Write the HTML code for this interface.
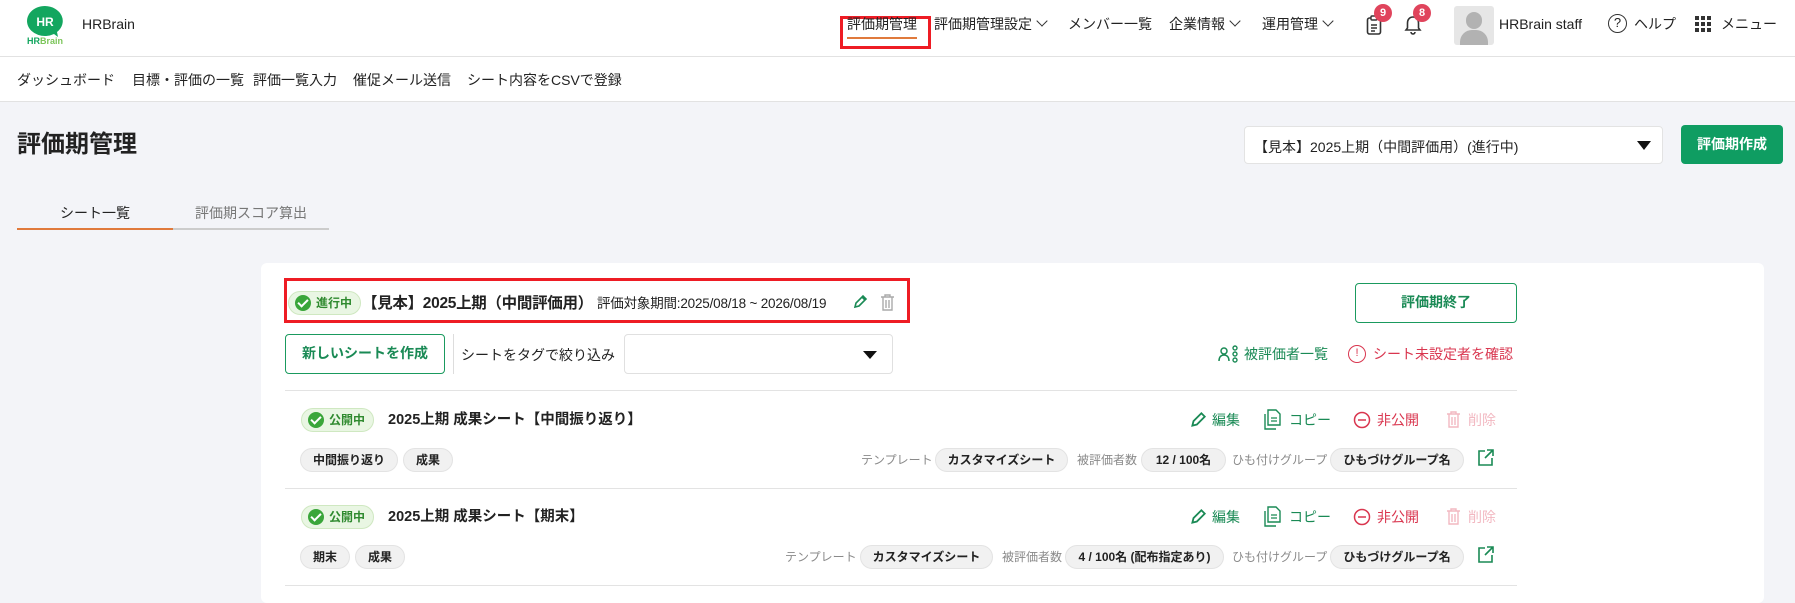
<!DOCTYPE html>
<html><head><meta charset="utf-8"><style>
*{box-sizing:border-box;margin:0;padding:0}
body{width:1795px;height:592px;overflow:hidden;background:#f3f4f8;font-family:"Liberation Sans","Noto Sans CJK JP",sans-serif;color:#222;position:relative}
.a{position:absolute;white-space:nowrap}
.hdr{left:0;top:0;width:1795px;height:57px;background:#fff;border-bottom:1px solid #e2e2e2}
.sub{left:0;top:57px;width:1795px;height:45px;background:#fff;border-bottom:1px solid #e2e2e2}
.nav{font-size:14px;top:15px;line-height:18px;color:#222}
.chev{display:inline-block;width:8px;height:8px;border-right:1.5px solid #333;border-bottom:1.5px solid #333;transform:rotate(45deg);margin:0 0 4px 6px}
.badge{background:#e0445c;color:#fff;font-size:11px;font-weight:bold;width:18px;height:18px;border-radius:9px;text-align:center;line-height:18px}
.sn{top:71px;font-size:14px;line-height:18px}
.card{left:261px;top:263px;width:1503px;height:340px;background:#fff;border-radius:6px}
.st{background:#e9f6e3;border:1px solid #cfe8c1;border-radius:13px;font-size:12px;font-weight:bold;color:#2f8a2f;height:24px;line-height:22px;padding-left:27px;padding-right:8px}
.st i{position:absolute;left:6px;top:3px;width:16px;height:16px;border-radius:8px;background:#3aa63a}
.st i:after{content:"";position:absolute;left:5px;top:2px;width:4px;height:8px;border-right:2px solid #fff;border-bottom:2px solid #fff;transform:rotate(45deg)}
.pill{background:#f1f1f1;border:1px solid #e3e3e3;border-radius:12px;font-size:12px;font-weight:bold;height:24px;line-height:22px;padding:0 10px;text-align:center}
.lbl{font-size:12px;color:#8a8a8a;line-height:22px}
.hr{height:1px;background:#e3e3e3;left:285px;width:1232px}
.act{font-size:14px;line-height:18px}
.g{color:#1a8a55}.r{color:#d9364f}.p{color:#f2b8c1}
</style></head><body>
<div class="a hdr"></div>
<div class="a sub"></div>
<svg class="a" style="left:22px;top:4px" width="46" height="42" viewBox="0 0 46 42"><path d="M23 2a18 15 0 1 0 9 28l4 3-1-5a18 15 0 0 0-12-26z" fill="#13a65f"/><text x="23" y="22" font-size="12" font-weight="bold" fill="#fff" text-anchor="middle" font-family="Liberation Sans">HR</text><text x="23" y="40" font-size="9" font-weight="bold" fill="#13a65f" text-anchor="middle" font-family="Liberation Sans">HR<tspan fill="#7cc55a">Brain</tspan></text></svg>
<div class="a" style="left:82px;top:16px;font-size:14px">HRBrain</div>
<div class="a" style="left:840px;top:16px;width:91px;height:33px;border:3px solid #ee1c24"></div>
<div class="a nav" style="left:847px">評価期管理</div>
<div class="a" style="left:847px;top:37px;width:70px;height:2px;background:#e07a3c"></div>
<div class="a nav" style="left:934px">評価期管理設定<span class="chev"></span></div>
<div class="a nav" style="left:1068px">メンバー一覧</div>
<div class="a nav" style="left:1169px">企業情報<span class="chev"></span></div>
<div class="a nav" style="left:1262px">運用管理<span class="chev"></span></div>
<svg class="a" style="left:1366px;top:15px" width="16" height="20" viewBox="0 0 16 20"><rect x="1.5" y="3" width="13" height="16" rx="2" fill="none" stroke="#333" stroke-width="1.6"/><rect x="5" y="1" width="6" height="4" rx="1" fill="#fff" stroke="#333" stroke-width="1.4"/><path d="M5 10h6M5 13h6M5 16h4" stroke="#333" stroke-width="1.4"/></svg>
<div class="a badge" style="left:1374px;top:4px">9</div>
<svg class="a" style="left:1404px;top:15px" width="18" height="20" viewBox="0 0 18 20"><path d="M9 2c-3.5 0-5.5 2.600-5.500 6v5L2 15h14l-1.5-2V8C14.5 4.6 12.5 2 9 2z" fill="none" stroke="#333" stroke-width="1.6"/><path d="M7 17a2 2 0 0 0 4 0" fill="none" stroke="#333" stroke-width="1.6"/></svg>
<div class="a badge" style="left:1413px;top:4px">8</div>
<div class="a" style="left:1454px;top:6px;width:40px;height:39px;background:#e6e6e6;border-radius:3px;overflow:hidden"><div class="a" style="left:12px;top:6px;width:16px;height:17px;border-radius:8px;background:#b2b2b2"></div><div class="a" style="left:6px;top:24px;width:28px;height:22px;border-radius:12px 12px 0 0;background:#b2b2b2"></div></div>
<div class="a nav" style="left:1499px">HRBrain staff</div>
<div class="a" style="left:1608px;top:14px;width:19px;height:19px;border:1.6px solid #333;border-radius:50%;font-size:13px;text-align:center;line-height:16px">?</div>
<div class="a nav" style="left:1634px">ヘルプ</div>
<svg class="a" style="left:1695px;top:16px" width="16" height="16"><g fill="#333"><rect x="0" y="0" width="4" height="4"/><rect x="6" y="0" width="4" height="4"/><rect x="12" y="0" width="4" height="4"/><rect x="0" y="6" width="4" height="4"/><rect x="6" y="6" width="4" height="4"/><rect x="12" y="6" width="4" height="4"/><rect x="0" y="12" width="4" height="4"/><rect x="6" y="12" width="4" height="4"/><rect x="12" y="12" width="4" height="4"/></g></svg>
<div class="a nav" style="left:1721px">メニュー</div>
<div class="a sn" style="left:17px">ダッシュボード</div>
<div class="a sn" style="left:132px">目標・評価の一覧</div>
<div class="a sn" style="left:253px">評価一覧入力</div>
<div class="a sn" style="left:353px">催促メール送信</div>
<div class="a sn" style="left:467px">シート内容をCSVで登録</div>
<div class="a" style="left:17px;top:130px;font-size:24px;font-weight:bold;line-height:30px">評価期管理</div>
<div class="a" style="left:1244px;top:126px;width:419px;height:38px;background:#fff;border:1px solid #e3e3e3;border-radius:4px"></div>
<div class="a" style="left:1254px;top:137px;font-size:14px">【見本】2025上期（中間評価用）(進行中)</div>
<div class="a" style="left:1637px;top:141px;border-left:7px solid transparent;border-right:7px solid transparent;border-top:9px solid #111"></div>
<div class="a" style="left:1681px;top:125px;width:102px;height:39px;background:#0f9d62;border-radius:4px;color:#fff;font-size:14px;font-weight:bold;text-align:center;line-height:39px">評価期作成</div>
<div class="a" style="left:17px;top:203px;width:156px;text-align:center;font-size:14px">シート一覧</div>
<div class="a" style="left:173px;top:203px;width:156px;text-align:center;font-size:14px;color:#777">評価期スコア算出</div>
<div class="a" style="left:17px;top:228px;width:156px;height:2px;background:#e07a3c"></div>
<div class="a" style="left:173px;top:228px;width:156px;height:2px;background:#ccc"></div>
<div class="a card"></div>
<div class="a" style="left:284px;top:278px;width:626px;height:45px;border:3px solid #ee1c24"></div>
<div class="a st" style="left:288px;top:291px"><i></i>進行中</div>
<div class="a" style="left:362px;top:294px;font-size:15.5px;font-weight:bold;line-height:20px;letter-spacing:-0.3px">【見本】2025上期（中間評価用）</div>
<div class="a" style="left:597px;top:295px;font-size:13.5px;line-height:18px;letter-spacing:-0.2px">評価対象期間:2025/08/18 ~ 2026/08/19</div>
<svg class="a" style="left:852px;top:294px" width="16" height="16" viewBox="0 0 16 16"><path d="M3 13l1-4 7-7 3 3-7 7z M10 3l3 3" fill="none" stroke="#1a8a55" stroke-width="1.6"/></svg>
<svg class="a" style="left:880px;top:293px" width="15" height="18" viewBox="0 0 15 18"><path d="M1 4h13M5 4V2h5v2M3 4v13h9V4M6 7v8M9 7v8" fill="none" stroke="#aaa" stroke-width="1.4"/></svg>
<div class="a g" style="left:1355px;top:283px;width:162px;height:40px;border:1.5px solid #1a9a5e;border-radius:4px;text-align:center;line-height:37px;font-size:14px;font-weight:bold">評価期終了</div>
<div class="a g" style="left:285px;top:334px;width:160px;height:40px;border:1.5px solid #1a9a5e;border-radius:4px;text-align:center;line-height:37px;font-size:14px;font-weight:bold">新しいシートを作成</div>
<div class="a" style="left:453px;top:334px;width:1px;height:40px;background:#ddd"></div>
<div class="a" style="left:461px;top:345px;font-size:14px">シートをタグで絞り込み</div>
<div class="a" style="left:624px;top:334px;width:269px;height:40px;border:1px solid #e0e0e0;border-radius:4px"></div>
<div class="a" style="left:863px;top:351px;border-left:7px solid transparent;border-right:7px solid transparent;border-top:8px solid #111"></div>
<svg class="a" style="left:1218px;top:345px" width="22" height="18" viewBox="0 0 22 18"><circle cx="6" cy="6" r="3" fill="none" stroke="#1a8a55" stroke-width="1.5"/><path d="M1 16c0-4 2-6 5-6s5 2 5 6" fill="none" stroke="#1a8a55" stroke-width="1.5"/><circle cx="17" cy="3" r="2" fill="none" stroke="#1a8a55" stroke-width="1.4"/><circle cx="17" cy="9" r="2" fill="none" stroke="#1a8a55" stroke-width="1.4"/><circle cx="17" cy="15" r="2" fill="none" stroke="#1a8a55" stroke-width="1.4"/></svg>
<div class="a act g" style="left:1244px;top:345px">被評価者一覧</div>
<div class="a r" style="left:1348px;top:345px;width:18px;height:18px;border:1.5px solid #d9364f;border-radius:50%;font-size:11px;text-align:center;line-height:15px">!</div>
<div class="a act r" style="left:1373px;top:345px">シート未設定者を確認</div>
<div class="a hr" style="top:390px"></div>
<div class="a st" style="left:301px;top:408px"><i></i>公開中</div>
<div class="a" style="left:388px;top:411px;font-size:14.5px;font-weight:bold;line-height:18px">2025上期 成果シート【中間振り返り】</div>
<div class="a pill" style="left:300px;top:448px;width:98px">中間振り返り</div>
<div class="a pill" style="left:403px;top:448px;width:50px">成果</div>
<div class="a lbl" style="left:861px;top:449px">テンプレート</div>
<div class="a pill" style="left:935px;top:448px;width:133px">カスタマイズシート</div>
<div class="a lbl" style="left:1077px;top:449px">被評価者数</div>
<div class="a pill" style="left:1141px;top:448px;width:85px">12 / 100名</div>
<div class="a lbl" style="left:1232px;top:449px">ひも付けグループ</div>
<div class="a pill" style="left:1330px;top:448px;width:134px">ひもづけグループ名</div>
<div class="a hr" style="top:488px"></div>
<div class="a st" style="left:301px;top:505px"><i></i>公開中</div>
<div class="a" style="left:388px;top:508px;font-size:14.5px;font-weight:bold;line-height:18px">2025上期 成果シート【期末】</div>
<div class="a pill" style="left:300px;top:545px;width:50px">期末</div>
<div class="a pill" style="left:355px;top:545px;width:50px">成果</div>
<div class="a lbl" style="left:785px;top:546px">テンプレート</div>
<div class="a pill" style="left:860px;top:545px;width:133px">カスタマイズシート</div>
<div class="a lbl" style="left:1002px;top:546px">被評価者数</div>
<div class="a pill" style="left:1065px;top:545px;width:159px">4 / 100名 (配布指定あり)</div>
<div class="a lbl" style="left:1232px;top:546px">ひも付けグループ</div>
<div class="a pill" style="left:1330px;top:545px;width:134px">ひもづけグループ名</div>
<div class="a hr" style="top:585px"></div>
<svg class="a" style="left:1189px;top:411px" width="18" height="18" viewBox="0 0 16 16"><path d="M3 13l1-4 7-7 3 3-7 7z" fill="none" stroke="#1a8a55" stroke-width="1.6"/></svg>
<div class="a act g" style="left:1212px;top:411px">編集</div>
<svg class="a" style="left:1264px;top:409px" width="17" height="21" viewBox="0 0 17 21"><path d="M4 1h8l4 4v11H4z" fill="none" stroke="#1a8a55" stroke-width="1.4"/><path d="M1 5v15h11" fill="none" stroke="#1a8a55" stroke-width="1.4"/><path d="M7 9h6M7 12h6" stroke="#1a8a55" stroke-width="1.3"/></svg>
<div class="a act g" style="left:1289px;top:411px">コピー</div>
<svg class="a" style="left:1353px;top:411px" width="18" height="18"><circle cx="9" cy="9" r="7.5" fill="none" stroke="#d9364f" stroke-width="1.5"/><path d="M5 9h8" stroke="#d9364f" stroke-width="1.5"/></svg>
<div class="a act r" style="left:1377px;top:411px">非公開</div>
<svg class="a" style="left:1446px;top:410px" width="15" height="18" viewBox="0 0 15 18"><path d="M1 4h13M5 4V2h5v2M3 4v13h9V4M6 7v8M9 7v8" fill="none" stroke="#f2b8c1" stroke-width="1.4"/></svg>
<div class="a act p" style="left:1468px;top:411px">削除</div>
<svg class="a" style="left:1477px;top:449px" width="17" height="17" viewBox="0 0 17 17"><path d="M8 2H2v14h13V9M10 1h6v6M16 1L8 9" fill="none" stroke="#1a8a55" stroke-width="1.6"/></svg>
<svg class="a" style="left:1189px;top:508px" width="18" height="18" viewBox="0 0 16 16"><path d="M3 13l1-4 7-7 3 3-7 7z" fill="none" stroke="#1a8a55" stroke-width="1.6"/></svg>
<div class="a act g" style="left:1212px;top:508px">編集</div>
<svg class="a" style="left:1264px;top:506px" width="17" height="21" viewBox="0 0 17 21"><path d="M4 1h8l4 4v11H4z" fill="none" stroke="#1a8a55" stroke-width="1.4"/><path d="M1 5v15h11" fill="none" stroke="#1a8a55" stroke-width="1.4"/><path d="M7 9h6M7 12h6" stroke="#1a8a55" stroke-width="1.3"/></svg>
<div class="a act g" style="left:1289px;top:508px">コピー</div>
<svg class="a" style="left:1353px;top:508px" width="18" height="18"><circle cx="9" cy="9" r="7.5" fill="none" stroke="#d9364f" stroke-width="1.5"/><path d="M5 9h8" stroke="#d9364f" stroke-width="1.5"/></svg>
<div class="a act r" style="left:1377px;top:508px">非公開</div>
<svg class="a" style="left:1446px;top:507px" width="15" height="18" viewBox="0 0 15 18"><path d="M1 4h13M5 4V2h5v2M3 4v13h9V4M6 7v8M9 7v8" fill="none" stroke="#f2b8c1" stroke-width="1.4"/></svg>
<div class="a act p" style="left:1468px;top:508px">削除</div>
<svg class="a" style="left:1477px;top:546px" width="17" height="17" viewBox="0 0 17 17"><path d="M8 2H2v14h13V9M10 1h6v6M16 1L8 9" fill="none" stroke="#1a8a55" stroke-width="1.6"/></svg>
</body></html>
